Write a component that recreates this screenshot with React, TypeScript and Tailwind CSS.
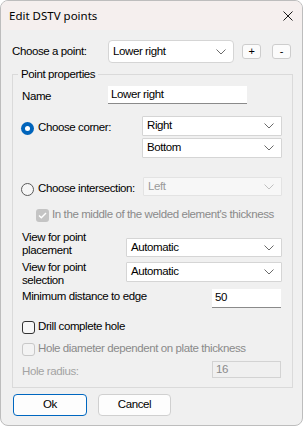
import React from "react";

const F = "font-['Liberation_Sans',Arial,sans-serif]";

function Chevron({ color = "#5f5f5f" }: { color?: string }) {
  return (
    <svg width="10" height="6" viewBox="0 0 10 6" className="shrink-0">
      <path d="M0.5 0.5 L5 5 L9.5 0.5" fill="none" stroke={color} strokeWidth="1" />
    </svg>
  );
}

function Combo({
  value,
  w,
  h,
  disabled = false,
  rounded = false,
}: {
  value: string;
  w: string;
  h: string;
  disabled?: boolean;
  rounded?: boolean;
}) {
  return (
    <div
      className={`${w} ${h} flex items-center justify-between pl-[4px] pr-[7px] border ${
        disabled ? "bg-[#f7f7f7] border-[#e3e3e3] text-[#9a9a9a]" : "bg-white border-[#d5d5d5] text-black"
      } ${rounded ? "rounded-[4px]" : "rounded-[1px]"}`}
    >
      <span className="leading-none">{value}</span>
      <Chevron color={disabled ? "#c0c0c0" : "#6a6a6a"} />
    </div>
  );
}

function Radio({ checked }: { checked: boolean }) {
  return checked ? (
    <div className="w-[13px] h-[13px] rounded-full bg-[#0064bb] flex items-center justify-center shrink-0">
      <div className="w-[5px] h-[5px] rounded-full bg-white" />
    </div>
  ) : (
    <div className="w-[13px] h-[13px] rounded-full border border-[#5a5a5a] bg-[#f6f6f6] shrink-0" />
  );
}

export default function App() {
  return (
    <div className={`w-[304px] h-[429px] bg-white overflow-hidden ${F} text-[11.5px] tracking-[-0.4px] text-black`}>
      <div className="w-[303px] h-[426px] rounded-[8px] border border-[#bdbdbd] bg-[#f0f0f0] overflow-hidden flex flex-col">
        {/* Title bar */}
        <div className="h-[29px] shrink-0 bg-[#f5efee] flex items-center justify-between pl-[8px] pr-[9px]">
          <span className="font-['Noto_Sans',sans-serif] text-[11.5px] tracking-normal leading-none pt-[1px]">
            Edit DSTV points
          </span>
          <svg width="10" height="10" viewBox="0 0 10 10">
            <path d="M0.5 0.5 L9.5 9.5 M9.5 0.5 L0.5 9.5" stroke="#1a1a1a" strokeWidth="1" />
          </svg>
        </div>

        {/* Body */}
        <div className="flex flex-col pl-[11px]">
          {/* Choose a point */}
          <div className="mt-[10px] h-[23px] flex items-center">
            <span className="w-[96px] leading-none">Choose a point:</span>
            <Combo value="Lower right" w="w-[126px]" h="h-[23px]" rounded />
            <div className="ml-[8px] w-[19px] h-[15px] rounded-[3px] border border-[#cdcdcd] bg-[#fbfbfb] flex items-center justify-center text-[11px] leading-none">
              +
            </div>
            <div className="ml-[11px] w-[19px] h-[15px] rounded-[3px] border border-[#cdcdcd] bg-[#fbfbfb] flex items-center justify-center text-[11px] leading-none">
              -
            </div>
          </div>

          {/* Group */}
          <fieldset className="mt-[4px] w-[281px] border border-[#dadada] pl-[5px] pr-[9px] pb-[9px]">
            <legend className="px-[3px] leading-[14px]">Point properties</legend>
            <div className="pl-[4px] flex flex-col">
              {/* Name */}
              <div className="mt-[5px] h-[18px] flex items-center">
                <span className="w-[86px] leading-none pt-[4px]">Name</span>
                <div className="w-[139px] h-[18px] bg-white border-b border-[#8a8a8a] pl-[3px] flex items-center leading-none">
                  Lower right
                </div>
              </div>

              {/* Choose corner */}
              <div className="mt-[12px] flex">
                <div className="w-[120px] h-[20px] mt-[2px] flex items-center -ml-[1px]">
                  <Radio checked />
                  <span className="ml-[4px] leading-none">Choose corner:</span>
                </div>
                <div className="flex flex-col gap-[2px] ml-[1px]">
                  <Combo value="Right" w="w-[140px]" h="h-[20px]" />
                  <Combo value="Bottom" w="w-[140px]" h="h-[20px]" />
                </div>
              </div>

              {/* Choose intersection */}
              <div className="mt-[19px] flex items-start">
                <div className="w-[122px] h-[20px] mt-[2px] flex items-center -ml-[1px] whitespace-nowrap">
                  <Radio checked={false} />
                  <span className="ml-[4px] leading-none">Choose intersection:</span>
                </div>
                <Combo value="Left" w="w-[139px]" h="h-[19px]" disabled />
              </div>

              {/* middle checkbox */}
              <div className="mt-[9px] h-[14px] flex items-center">
                <div className="ml-[14px] w-[13px] h-[13px] rounded-[3px] bg-[#c4c4c4] flex items-center justify-center shrink-0">
                  <svg width="9" height="7" viewBox="0 0 9 7">
                    <path d="M1 3.5 L3.3 5.8 L8 1" fill="none" stroke="white" strokeWidth="1.4" />
                  </svg>
                </div>
                <span className="ml-[3px] leading-none text-[#8a8a8a] whitespace-nowrap">
                  In the middle of the welded element's thickness
                </span>
              </div>

              {/* View for point placement */}
              <div className="mt-[9px] flex items-start">
                <div className="w-[104px] leading-[13px]">
                  View for point
                  <br />
                  placement
                </div>
                <div className="mt-[7px]">
                  <Combo value="Automatic" w="w-[156px]" h="h-[19px]" />
                </div>
              </div>

              {/* View for point selection */}
              <div className="mt-[4px] flex items-start">
                <div className="w-[104px] leading-[13px]">
                  View for point
                  <br />
                  selection
                </div>
                <div className="mt-[1px]">
                  <Combo value="Automatic" w="w-[156px]" h="h-[20px]" />
                </div>
              </div>

              {/* Min distance */}
              <div className="mt-[2px] flex items-start">
                <div className="w-[190px] leading-[14px]">Minimum distance to edge</div>
                <div className="w-[69px] h-[19px] bg-white border-b border-[#8a8a8a] pl-[3px] flex items-center leading-none">
                  50
                </div>
              </div>

              {/* Drill complete hole */}
              <div className="mt-[12px] h-[14px] flex items-center">
                <div className="w-[13px] h-[13px] rounded-[3px] border border-[#333333] bg-[#f7f7f7] shrink-0" />
                <span className="ml-[3px] leading-none">Drill complete hole</span>
              </div>

              {/* Hole diameter */}
              <div className="mt-[8px] h-[14px] flex items-center">
                <div className="w-[13px] h-[13px] rounded-[3px] border border-[#c8c8c8] bg-[#f3f3f3] shrink-0" />
                <span className="ml-[3px] leading-none text-[#8a8a8a]">
                  Hole diameter dependent on plate thickness
                </span>
              </div>

              {/* Hole radius */}
              <div className="mt-[5px] flex items-start">
                <div className="w-[190px] mt-[3px] leading-[14px] text-[#a3a3a3]">Hole radius:</div>
                <div className="w-[69px] h-[17px] bg-[#f0f0f0] border border-[#d3d3d3] pl-[3px] flex items-center leading-none text-[#8a8a8a]">
                  16
                </div>
              </div>
            </div>
          </fieldset>

          {/* Buttons */}
          <div className="mt-[6px] flex">
            <div className="ml-[1px] w-[74px] h-[22px] rounded-[4px] border-[1.5px] border-[#0067c0] bg-[#fdfdfd] flex items-center justify-center leading-none">
              Ok
            </div>
            <div className="ml-[11px] w-[73px] h-[22px] rounded-[4px] border border-[#d0d0d0] bg-[#fdfdfd] flex items-center justify-center leading-none">
              Cancel
            </div>
          </div>
        </div>
      </div>
    </div>
  );
}
